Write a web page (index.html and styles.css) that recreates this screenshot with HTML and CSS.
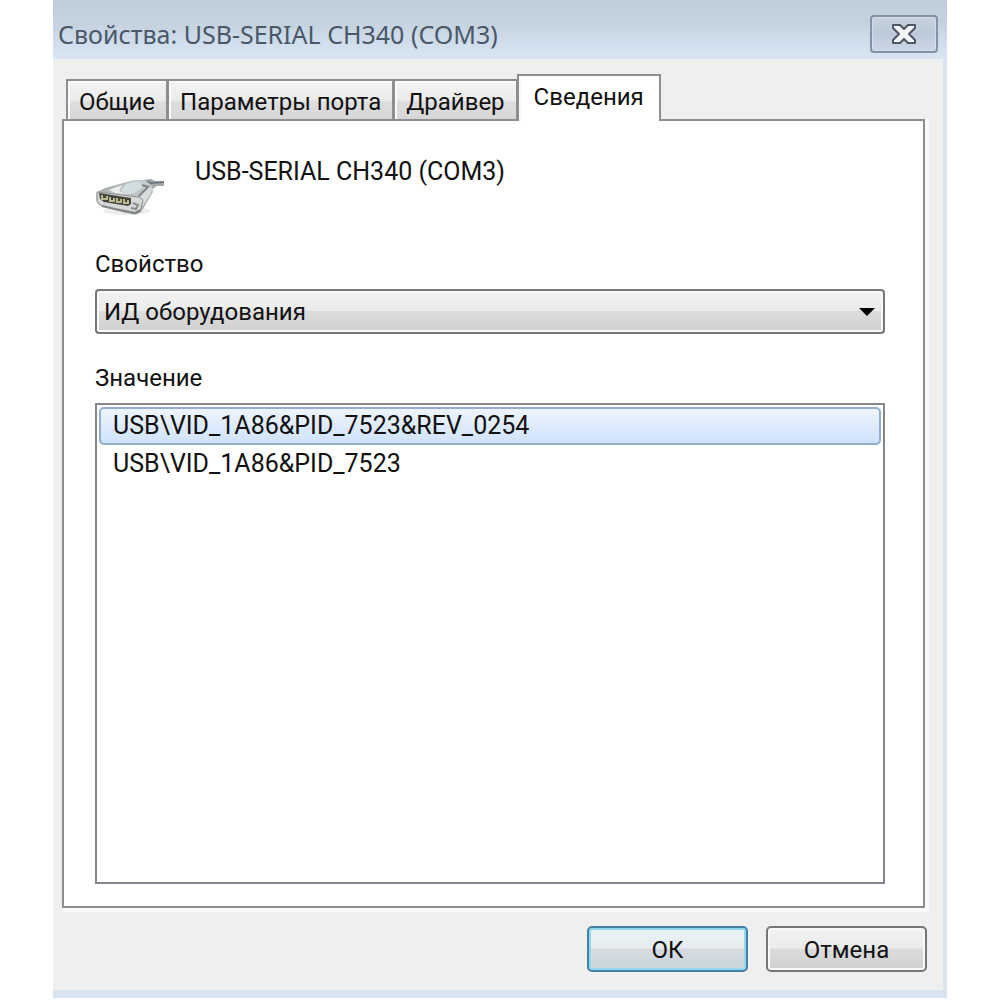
FILE: index.html
```html
<!DOCTYPE html>
<html lang="ru">
<head>
    <meta charset="UTF-8">
    <meta name="viewport" content="width=device-width, initial-scale=1.0">
    <title>Свойства: USB-SERIAL CH340 (COM3)</title>
    <link rel="stylesheet" href="styles.css">
</head>
<body>
    <div class="dialog" role="dialog" aria-labelledby="dialog-title">
        <header class="titlebar">
            <h1 id="dialog-title">Свойства: USB-SERIAL CH340 (COM3)</h1>
            <button type="button" class="close" aria-label="Закрыть">
                <svg width="26" height="22" viewBox="0 0 26 22">
                    <path d="M2 2H9L13 6L17 2H24V5L18 11L24 17V20H17L13 16L9 20H2V17L8 11L2 5Z" fill="#f4f6f9" stroke="#4e5663" stroke-width="2" stroke-linejoin="round"/>
                </svg>
            </button>
        </header>

        <main class="content">
            <div class="tabs" role="tablist">
                <button type="button" class="tab" role="tab">Общие</button>
                <button type="button" class="tab" role="tab">Параметры порта</button>
                <button type="button" class="tab" role="tab">Драйвер</button>
                <button type="button" class="tab active" role="tab" aria-selected="true">Сведения</button>
            </div>

            <section class="panel" role="tabpanel">
                <div class="device">
                    <svg class="device-icon" width="74" height="44" viewBox="0 0 74 44">
                        <defs>
                            <linearGradient id="shell" x1="0" y1="0" x2="1" y2="1">
                                <stop offset="0" stop-color="#8f9393"/>
                                <stop offset="0.45" stop-color="#c9cfd0"/>
                                <stop offset="1" stop-color="#9a9d9e"/>
                            </linearGradient>
                        </defs>
                        <ellipse cx="32" cy="34" rx="24" ry="4" fill="#ededed"/>
                        <!-- cable -->
                        <path d="M47 3L56 2L60 4H69V9H62L56 13L48 9Z" fill="#a3a8ab"/>
                        <path d="M48 4L56 6L69 5" fill="none" stroke="#777c80" stroke-width="2"/>
                        <!-- plug body -->
                        <path d="M2 15L10 11L28 6L40 3H50L57 9L58 15L48 32L42 37L30 36L4 28L1 22Z" fill="url(#shell)"/>
                        <path d="M14 13L27 8L24 14L30 17L20 16Z" fill="#eceeee"/>
                        <path d="M26 13L31 7L42 4L49 9L39 16L30 17Z" fill="#d3dee2"/>
                        <path d="M50 10L57 10L56 16L48 29L44 22Z" fill="#d9dbdc"/>
                        <path d="M47 8L53 10L44 19" fill="none" stroke="#7d8284" stroke-width="2"/>
                        <!-- connector face -->
                        <path d="M2 15L44 20L48 23L45 35L40 37L7 29L2 25Z" fill="#d6d7d7" stroke="#8b8e90"/>
                        <path d="M4 16L36 21V27L33 29L9 25L5 22Z" fill="#45453b"/>
                        <path d="M7 18V22H12V19M15 20V24H19V21M22 21V25H26V22M29 22V26H33V23" fill="none" stroke="#b9b98c" stroke-width="2"/>
                        <path d="M7 29L20 32L40 36L46 33" fill="none" stroke="#808485" stroke-width="2"/>
                        <path d="M38 26L43 28L41 32L36 31" fill="none" stroke="#8b8e90" stroke-width="2"/>
                    </svg>
                    <p class="device-name">USB-SERIAL CH340 (COM3)</p>
                </div>

                <label class="label" for="property">Свойство</label>
                <div class="combo">
                    <select id="property">
                        <option>ИД оборудования</option>
                    </select>
                </div>

                <label class="label" for="value">Значение</label>
                <select id="value" class="listbox" size="2">
                    <option selected>USB\VID_1A86&amp;PID_7523&amp;REV_0254</option>
                    <option>USB\VID_1A86&amp;PID_7523</option>
                </select>
            </section>

            <footer class="actions">
                <button type="button" class="btn primary">ОК</button>
                <button type="button" class="btn">Отмена</button>
            </footer>
        </main>
    </div>
</body>
</html>
```
FILE: styles.css
```css
* {
    box-sizing: border-box;
}

body {
    display: flex;
    flex-direction: column;
    min-height: 100vh;
    margin: 0;
    padding: 0 53px 2px;
    background-color: #fff;
    color: #111;
    font-family: Roboto, "Liberation Sans", sans-serif;
    font-size: 24px;
    line-height: 30px;
}

button,
select {
    font: inherit;
    color: inherit;
}

.dialog {
    flex: 1;
    display: flex;
    flex-direction: column;
    background-color: #d8e4f0;
    padding: 0 4px 8px 0;
}

/* Title bar */
.titlebar {
    display: flex;
    align-items: center;
    justify-content: space-between;
    height: 59px;
    margin-right: -4px;
    padding: 9px 9px 0 5px;
    background: linear-gradient(#c0cdda, #c5d2df 40%, #d1deed 75%, #d8e6f2);
}

h1 {
    margin: 0;
    color: #4a5868;
    font-family: "Noto Sans", "Open Sans", sans-serif;
    font-size: 25px;
    font-weight: 400;
}

.close {
    display: flex;
    align-items: center;
    justify-content: center;
    width: 68px;
    height: 38px;
    padding: 0;
    border: 2px solid #8492a7;
    border-radius: 4px;
    background: linear-gradient(#c5d1de, #bdcad9 50%, #cbd7e8);
    box-shadow: inset 0 0 0 1px #d3deea;
}

.content {
    flex: 1;
    display: flex;
    flex-direction: column;
    padding: 15px 18px 18px 9px;
    background-color: #efefef;
}

/* Tabs */
.tabs {
    display: flex;
    align-items: flex-end;
    padding-left: 4px;
}

.tab {
    height: 40px;
    padding: 4px 11px 0;
    border: 2px solid #8c8e92;
    border-bottom: none;
    background: linear-gradient(#f3f3f3, #ececec 50%, #dedede 55%, #d6d6d6);
    box-shadow: inset 1px 1px 0 1px #fafafa;
}

.tab + .tab {
    margin-left: -1px;
}

.tab.active {
    position: relative;
    height: 47px;
    margin-bottom: -2px;
    padding: 0 15px 4px;
    background: #fff;
}

.panel {
    flex: 1;
    display: flex;
    flex-direction: column;
    padding: 36px 38px 22px 31px;
    border: 2px solid #8c8e92;
    background-color: #fff;
    box-shadow: 2px 2px 0 2px #fafafa;
}

.device {
    display: flex;
    align-items: flex-start;
    gap: 26px;
    height: 92px;
}

.device-icon {
    margin-top: 20px;
}

.device-name {
    margin: 0;
    font-size: 25px;
}

.label {
    align-self: flex-start;
    margin-bottom: 10px;
}

/* Property drop-down */
.combo {
    position: relative;
    margin-bottom: 29px;
}

.combo select {
    display: block;
    width: 100%;
    height: 45px;
    padding: 0 40px 0 7px;
    appearance: none;
    border: 2px solid #777;
    border-radius: 4px;
    background: linear-gradient(#f2f2f2, #ebebeb 48%, #dcdcdc 50%, #cfcfcf);
    box-shadow: inset 0 0 0 2px #f8f8f8;
}

.combo::after {
    content: "";
    position: absolute;
    top: 19px;
    right: 10px;
    border: 8px solid transparent;
    border-top-color: #000;
    border-bottom: none;
    pointer-events: none;
}

/* Value list */
.listbox {
    flex: 1;
    min-height: 200px;
    padding: 2px;
    border: 2px solid #828790;
    border-radius: 0;
    background-color: #fff;
    font-size: 25px;
    outline: none;
}

.listbox option {
    min-height: 38px;
    padding: 2px 12px;
    border: 2px solid transparent;
    border-radius: 5px;
    line-height: 34px;
}

.listbox option:checked {
    border-color: #94aed0;
    background: linear-gradient(#eef4fe, #cfe2fc);
    color: #111;
}

/* Bottom buttons */
.actions {
    display: flex;
    justify-content: flex-end;
    gap: 18px;
    margin: 18px -2px 0 0;
}

.btn {
    width: 161px;
    height: 46px;
    padding: 2px 0 0;
    border: 2px solid #777;
    border-radius: 5px;
    background: linear-gradient(#f2f2f2, #ebebeb 48%, #dcdcdc 50%, #cfcfcf);
    box-shadow: inset 0 0 0 2px #f8f8f8;
}

.btn.primary {
    border-color: #45809f;
    background: linear-gradient(#e8f4f8, #e7ebee 48%, #d6dae0 50%, #c9d6dd);
    box-shadow: inset 0 0 0 2px #8fd8f0;
}
```
